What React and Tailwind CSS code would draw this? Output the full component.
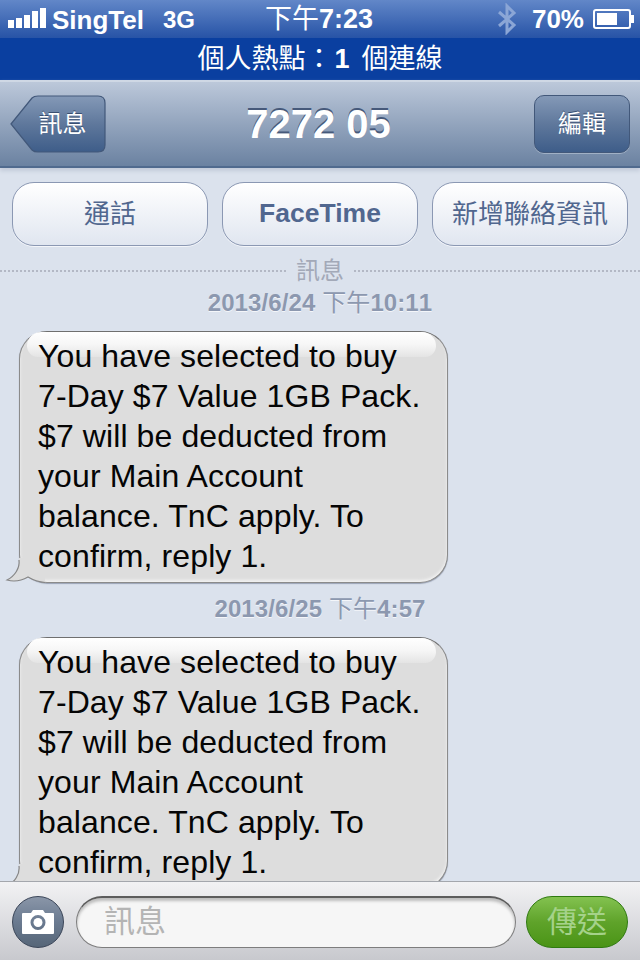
const SANS = "font-['Liberation_Sans','Noto_Sans_CJK_TC',sans-serif] [font-kerning:none]";

function Bubble() {
  return (
    <div className="relative ml-[19px] w-[429px] h-[252px] shrink-0">
      <div className="absolute inset-0 rounded-[28px] bg-[#dddddd] border border-[#8b8b8b] border-t-[#6f6f6f] shadow-[0_1px_1px_#9aa3b5,inset_0_-2px_3px_#f2f2f2]"></div>
      <svg className="absolute left-[-14px] bottom-[-1px]" width="50" height="26" viewBox="0 0 50 26">
        <path d="M14 0 L14 2 C15 10 10 18 2 22 C9 24 16 23 23 19 C28 22 33 24 40 24 L40 0 Z" fill="#dddddd" />
        <path d="M14 2 C15 10 10 18 2 22 C9 24 16 23 23 19 C28 22 33 24 40 24.5" fill="none" stroke="#868686" strokeWidth="1.2" />
      </svg>
      <div className="absolute left-[8px] right-[12px] top-[1px] h-[25px] rounded-b-[14px] rounded-t-[18px] bg-gradient-to-b from-[#ffffff] via-[#f6f6f6] to-[#e4e4e4]"></div>
      <div className="relative pl-[19px] pt-[5px] text-[32px] leading-[40px] tracking-[0.1px] text-[#050505] whitespace-nowrap [font-kerning:normal]">
        <div>You have selected to buy</div>
        <div>7-Day $7 Value 1GB Pack.</div>
        <div>$7 will be deducted from</div>
        <div>your Main Account</div>
        <div>balance. TnC apply. To</div>
        <div>confirm, reply 1.</div>
      </div>
    </div>
  );
}

function DateLabel({ date, time, className }) {
  return (
    <div className={`text-center text-[24px] leading-[30px] tracking-[0.1px] font-bold text-[#8c98af] [text-shadow:0_1px_0_#f4f6fa] ${className}`}>
      {date} <span className="font-normal">下午</span>{time}
    </div>
  );
}

function ActionButton({ children, bold }) {
  return (
    <div className={`flex-1 h-[64px] flex items-center justify-center rounded-[22px] border border-[#8b98b3] bg-gradient-to-b from-[#ffffff] to-[#e0e6f0] shadow-[0_1px_0_#f4f6fa] text-[#51678f] ${bold ? "font-bold text-[26.5px] [font-kerning:normal]" : "text-[26px]"}`}>
      {children}
    </div>
  );
}

export default function App() {
  return (
    <div className={`w-[640px] h-[960px] flex flex-col overflow-hidden bg-[#dbe2ed] ${SANS}`}>
      {/* status bar */}
      <div className="h-[38px] shrink-0 flex items-center relative bg-gradient-to-b from-[#6287c8] to-[#2753a6] text-white">
        <svg className="ml-[8px] shrink-0" width="38" height="22" viewBox="0 0 38 22" fill="#fff">
          <rect x="0" y="12" width="6" height="8" />
          <rect x="8" y="10" width="6" height="10" />
          <rect x="16" y="7" width="6" height="13" />
          <rect x="24" y="3" width="6" height="17" />
          <rect x="32" y="0" width="6" height="20" />
        </svg>
        <span className="ml-[6px] text-[26px] font-bold leading-none pt-[1px] [font-kerning:normal]">SingTel</span>
        <span className="ml-[19px] text-[24px] font-bold leading-none pt-[1px]">3G</span>
        <span className="absolute left-[265px] top-[4px] text-[27px] leading-[30px] whitespace-nowrap"><span className="font-normal">下午</span><span className="font-bold">7:23</span></span>
        <div className="ml-auto flex items-center">
          <svg width="20" height="32" viewBox="0 0 20 32" fill="none" stroke="#8ba6d6" strokeWidth="3">
            <path d="M2 9 L17 22 L10 29 L10 3 L17 10 L2 23" />
          </svg>
          <span className="ml-[15px] text-[26px] font-bold leading-none">70%</span>
          <div className="ml-[9px] mr-[6px] flex items-center">
            <div className="w-[38px] h-[20px] rounded-[3px] border-2 border-white p-[2px]">
              <div className="w-[20px] h-full bg-white"></div>
            </div>
            <div className="w-[3px] h-[8px] bg-white"></div>
          </div>
        </div>
      </div>
      {/* hotspot */}
      <div className="h-[42px] shrink-0 flex items-center justify-center bg-[#0a3fa0] text-white text-[27px] whitespace-nowrap">
        <span>個人熱點：</span><span className="ml-[2px] font-bold">1</span><span className="ml-[12px]">個連線</span>
      </div>
      {/* nav */}
      <div className="relative z-10 h-[88px] shrink-0 flex items-center justify-between pl-[10px] pr-[10px] border-t-2 border-t-[#cfd8e5] border-b-2 border-b-[#506a8e] bg-gradient-to-b from-[#bcc8da] to-[#6b82a1] shadow-[0_3px_4px_#c3cbd9]">
        <div className="relative w-[96px] h-[58px] flex items-center justify-center pl-[9px] text-white text-[24px] [text-shadow:0_-1px_0_#3a4f70]">
          <svg className="absolute inset-0" width="96" height="58" viewBox="0 0 96 58">
            <defs>
              <linearGradient id="bk" x1="0" y1="0" x2="0" y2="1">
                <stop offset="0" stopColor="#8499b7" />
                <stop offset="0.5" stopColor="#5f789c" />
                <stop offset="1" stopColor="#3e5d89" />
              </linearGradient>
            </defs>
            <path d="M1 29 L22 3 Q24 1 28 1 L88 1 Q95 1 95 8 L95 50 Q95 57 88 57 L28 57 Q24 57 22 55 Z" fill="url(#bk)" stroke="#42587a" strokeWidth="1.2" />
          </svg>
          <span className="relative">訊息</span>
        </div>
        <div className="mr-[3px] text-[40px] font-bold text-white leading-none [text-shadow:0_-2px_0_#46597a]">7272 05</div>
        <div className="w-[96px] h-[58px] flex items-center justify-center rounded-[10px] border border-[#42587a] bg-gradient-to-b from-[#8499b7] via-[#5f789c] to-[#3e5d89] text-white text-[24px] [text-shadow:0_-1px_0_#3a4f70] shadow-[0_1px_0_#a0b0c5]">編輯</div>
      </div>
      {/* conversation */}
      <div className="flex-1 min-h-0 overflow-hidden pt-[14px]">
        <div className="flex gap-[14px] px-[12px]">
          <ActionButton>通話</ActionButton>
          <ActionButton bold>FaceTime</ActionButton>
          <ActionButton>新增聯絡資訊</ActionButton>
        </div>
        <div className="mt-[11px] h-[28px] flex items-center">
          <div className="flex-1 border-t-2 border-dotted border-[#b3b8c5]"></div>
          <span className="mx-[10px] text-[24px] leading-none text-[#a3a9b8]">訊息</span>
          <div className="flex-1 border-t-2 border-dotted border-[#b3b8c5]"></div>
        </div>
        <DateLabel date="2013/6/24" time="10:11" className="mt-[3px]" />
        <div className="h-[13px]"></div>
        <Bubble />
        <DateLabel date="2013/6/25" time="4:57" className="mt-[11px]" />
        <div className="h-[13px]"></div>
        <Bubble />
      </div>
      {/* input bar */}
      <div className="relative z-10 h-[79px] shrink-0 flex items-center pl-[12px] pt-[1px] border-t border-t-[#a4a7ad] bg-gradient-to-b from-[#f2f2f4] to-[#c8c9ce]">
        <div className="w-[52px] h-[52px] shrink-0 rounded-full border border-[#3a4558] bg-gradient-to-b from-[#8a96a8] via-[#6a7a90] to-[#566678] flex items-center justify-center">
          <svg width="32" height="24" viewBox="0 0 32 24">
            <path fillRule="evenodd" fill="#fff" d="M1 3 L9 3 L11 0 L21 0 L23 3 L31 3 Q32 3 32 4 L32 23 Q32 24 31 24 L1 24 Q0 24 0 23 L0 4 Q0 3 1 3 Z M16 5 A7.5 7.5 0 1 0 16 20 A7.5 7.5 0 1 0 16 5 Z" />
            <circle cx="16" cy="12.5" r="4.5" fill="#fff" />
          </svg>
        </div>
        <div className="ml-[12px] w-[440px] h-[52px] shrink-0 rounded-[26px] border border-[#7d7d7d] border-t-2 border-t-[#5c5c5c] bg-[#f6f6f6] shadow-[inset_0_3px_3px_#bdbdbd] flex items-center pl-[27px] text-[31px] text-[#b4b4b4]">訊息</div>
        <div className="ml-[10px] w-[102px] h-[52px] shrink-0 rounded-[26px] border border-[#2f7a10] bg-gradient-to-b from-[#83c24f] via-[#5fa32a] to-[#4a9415] flex items-center justify-center text-[30px] text-[#a5d28a]">傳送</div>
      </div>
    </div>
  );
}
